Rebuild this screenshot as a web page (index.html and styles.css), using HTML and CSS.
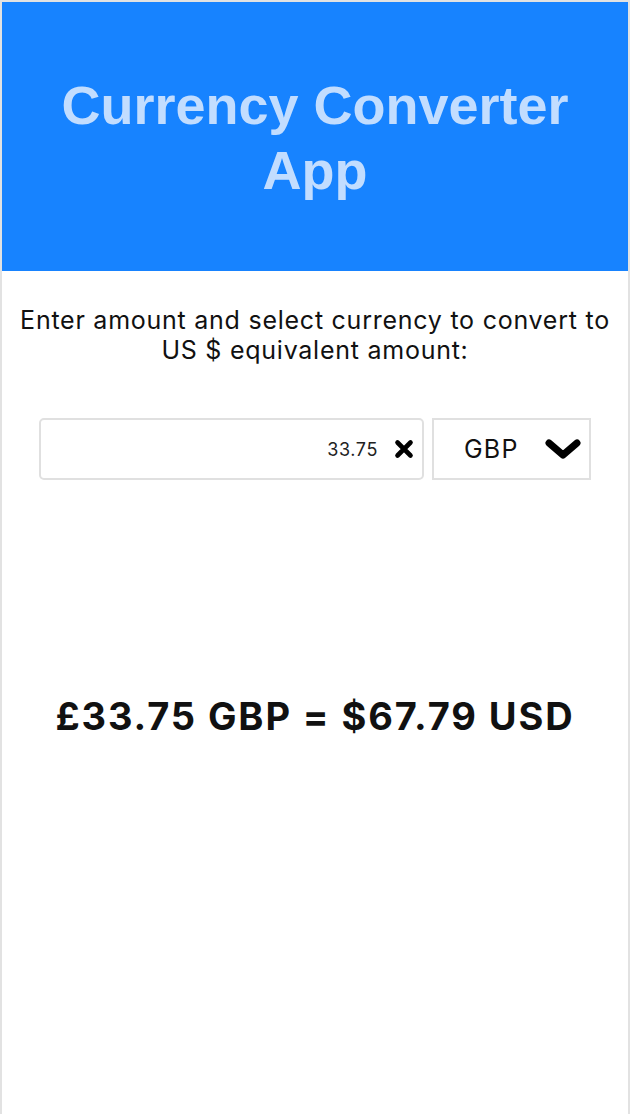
FILE: index.html
```html
<!DOCTYPE html>
<html lang="en">
<head>
<meta charset="utf-8">
<title>Currency Converter App</title>
<link rel="stylesheet" href="styles.css">
</head>
<body>
<div class="app">
  <header class="header">
    <h1 class="title">Currency Converter<br>App</h1>
  </header>
  <main class="main">
    <p class="intro">Enter amount and select currency to convert to US $ equivalent amount:</p>
    <div class="controls">
      <div class="amount">
        <span class="amount-value">33.75</span>
        <svg class="clear-icon" viewBox="0 0 20 20" width="20" height="20" aria-hidden="true">
          <path d="M3.5 3.5 L16.5 16.5 M16.5 3.5 L3.5 16.5" stroke="#000" stroke-width="4.6" stroke-linecap="round" fill="none"/>
        </svg>
      </div>
      <div class="currency">
        <span class="currency-code">GBP</span>
        <svg class="chevron" viewBox="0 0 36 22" width="36" height="22" aria-hidden="true">
          <path d="M4 5 L18 17 L32 5" stroke="#000" stroke-width="7" stroke-linecap="round" stroke-linejoin="round" fill="none"/>
        </svg>
      </div>
    </div>
    <p class="result">£33.75 GBP = $67.79 USD</p>
  </main>
</div>
</body>
</html>
```
FILE: styles.css
```css
html, body {
  margin: 0;
  padding: 0;
  background: #ffffff;
}

.app {
  box-sizing: border-box;
  width: 630px;
  min-height: 1114px;
  border: 2px solid #e2e2e2;
  border-bottom: none;
  background: #ffffff;
  display: flex;
  flex-direction: column;
}

.header {
  height: 269px;
  background: #1783ff;
  display: flex;
  align-items: center;
  justify-content: center;
}

.title {
  margin: 0;
  font-family: "Liberation Sans", Arial, sans-serif;
  font-weight: 700;
  font-size: 54px;
  line-height: 65px;
  color: #c2ddff;
  text-align: center;
  padding-top: 2px;
}

.main {
  display: flex;
  flex-direction: column;
  align-items: center;
}

.intro {
  margin: 34px 0 0;
  font-family: Inter, "Noto Sans", sans-serif;
  font-size: 25px;
  line-height: 30px;
  letter-spacing: 0.75px;
  color: #111111;
  text-align: center;
  width: 600px;
}

.controls {
  margin-top: 53px;
  display: flex;
  gap: 8px;
  width: 552px;
  height: 62px;
}

.amount {
  box-sizing: border-box;
  width: 385px;
  height: 62px;
  border: 2px solid #e0e0e0;
  border-radius: 5px;
  display: flex;
  align-items: center;
  justify-content: flex-end;
  padding-right: 8px;
  gap: 16px;
}

.amount-value {
  font-family: Inter, "Noto Sans", sans-serif;
  font-size: 18px;
  letter-spacing: 0.6px;
  color: #222222;
}

.clear-icon {
  display: block;
}

.currency {
  box-sizing: border-box;
  width: 159px;
  height: 62px;
  border: 2px solid #e0e0e0;
  display: flex;
  align-items: center;
  justify-content: space-between;
  padding: 0 8px 0 30px;
}

.currency-code {
  font-family: Inter, "Noto Sans", sans-serif;
  font-size: 25px;
  letter-spacing: 1.2px;
  color: #111111;
}

.chevron {
  display: block;
}

.result {
  margin: 214px 0 0;
  font-family: Inter, "Noto Sans", sans-serif;
  font-weight: 700;
  font-size: 38px;
  line-height: 44px;
  letter-spacing: 1.9px;
  color: #111111;
  text-align: center;
}
```
